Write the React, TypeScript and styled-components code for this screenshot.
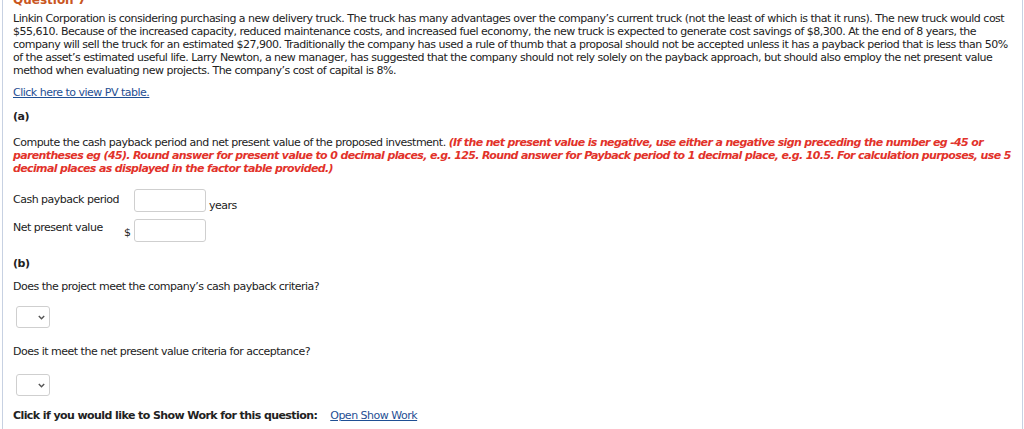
import React from "react";
import styled, { createGlobalStyle } from "styled-components";

const Global = createGlobalStyle`
  html, body { margin: 0; padding: 0; background: #fff; }
  body {
    font-family: Verdana, "DejaVu Sans", sans-serif;
    font-size: 11px;
    color: #222;
    letter-spacing: -0.5px;
  }
`;

const Frame = styled.div`
  margin: 0 1px 0 2px;
  height: 429px;
  border-left: 1px solid #c7d1e2;
  border-right: 1px solid #c7d1e2;
  padding: 0 10px;
  box-sizing: border-box;
  overflow: hidden;
`;

const Title = styled.div`
  margin-top: -6px;
  height: 12px;
  font-size: 12px;
  font-weight: bold;
  color: #c9561f;
  line-height: 12px;
  letter-spacing: 0;
`;

const Para = styled.p<{ $mt: number }>`
  margin: ${(p) => p.$mt}px 0 0;
  line-height: 13px;
  white-space: nowrap;
`;

const Link = styled.a<{ $mt: number }>`
  display: block;
  color: #1f4f94;
  text-decoration: underline;
  line-height: 13px;
  margin-top: ${(p) => p.$mt}px;
  width: fit-content;
`;

const Part = styled.div<{ $mt: number }>`
  font-weight: bold;
  line-height: 13px;
  margin-top: ${(p) => p.$mt}px;
`;

const Red = styled.span`
  color: #e2322a;
  font-weight: bold;
  font-style: italic;
  letter-spacing: -0.64px;
`;

const Row = styled.div<{ $mt: number }>`
  display: flex;
  align-items: flex-start;
  margin-top: ${(p) => p.$mt}px;
`;

const Label = styled.div<{ $pt: number }>`
  width: 111px;
  line-height: 13px;
  padding-top: ${(p) => p.$pt}px;
  white-space: nowrap;
`;

const Dollar = styled.span`
  width: 10px;
  padding-top: 7px;
  line-height: 13px;
`;

const Field = styled.div`
  width: 70px;
  height: 21px;
  border: 1px solid #cfcfcf;
  border-radius: 3px;
  background: #fff;
`;

const Unit = styled.span`
  padding-top: 10px;
  margin-left: 3px;
  line-height: 13px;
`;

const Question = styled.div<{ $mt: number }>`
  line-height: 13px;
  margin-top: ${(p) => p.$mt}px;
  white-space: nowrap;
`;

const Select = styled.div<{ $mt: number }>`
  margin-top: ${(p) => p.$mt}px;
  margin-left: 3px;
  width: 34px;
  height: 22px;
  border: 1px solid #cfcfcf;
  border-radius: 3px;
  display: flex;
  align-items: center;
  justify-content: flex-end;
  padding-right: 4px;
  box-sizing: border-box;
`;

const Footer = styled.div<{ $mt: number }>`
  display: flex;
  align-items: baseline;
  margin-top: ${(p) => p.$mt}px;
  line-height: 13px;
  white-space: nowrap;
`;

const Strong = styled.span`
  font-weight: bold;
  margin-right: 13px;
  letter-spacing: -0.58px;
`;

const Chevron = () => (
  <svg width="7" height="5" viewBox="0 0 7 5">
    <path d="M0.8 1 L3.5 3.8 L6.2 1" fill="none" stroke="#555" strokeWidth="1.4" />
  </svg>
);

export default function App() {
  return (
    <>
      <Global />
      <Frame>
        <Title>Question 7</Title>
        <Para $mt={6}>
          Linkin Corporation is considering purchasing a new delivery truck. The truck has many advantages over the company’s current truck (not the least of which is that it runs). The new truck would cost
          <br />
          $55,610. Because of the increased capacity, reduced maintenance costs, and increased fuel economy, the new truck is expected to generate cost savings of $8,300. At the end of 8 years, the
          <br />
          company will sell the truck for an estimated $27,900. Traditionally the company has used a rule of thumb that a proposal should not be accepted unless it has a payback period that is less than 50%
          <br />
          of the asset’s estimated useful life. Larry Newton, a new manager, has suggested that the company should not rely solely on the payback approach, but should also employ the net present value
          <br />
          method when evaluating new projects. The company’s cost of capital is 8%.
        </Para>
        <Link $mt={9} href="#">Click here to view PV table.</Link>
        <Part $mt={11}>(a)</Part>
        <Para $mt={13}>
          Compute the cash payback period and net present value of the proposed investment.{" "}
          <Red>(If the net present value is negative, use either a negative sign preceding the number eg -45 or</Red>
          <br />
          <Red>parentheses eg (45). Round answer for present value to 0 decimal places, e.g. 125. Round answer for Payback period to 1 decimal place, e.g. 10.5. For calculation purposes, use 5</Red>
          <br />
          <Red>decimal places as displayed in the factor table provided.)</Red>
        </Para>
        <Row $mt={14}>
          <Label $pt={4}>Cash payback period</Label>
          <Dollar />
          <Field />
          <Unit>years</Unit>
        </Row>
        <Row $mt={7}>
          <Label $pt={2}>Net present value</Label>
          <Dollar>$</Dollar>
          <Field />
        </Row>
        <Part $mt={15}>(b)</Part>
        <Question $mt={10}>Does the project meet the company’s cash payback criteria?</Question>
        <Select $mt={13}><Chevron /></Select>
        <Question $mt={17}>Does it meet the net present value criteria for acceptance?</Question>
        <Select $mt={16}><Chevron /></Select>
        <Footer $mt={13}>
          <Strong>Click if you would like to Show Work for this question:</Strong>
          <Link $mt={0} href="#">Open Show Work</Link>
        </Footer>
      </Frame>
    </>
  );
}
